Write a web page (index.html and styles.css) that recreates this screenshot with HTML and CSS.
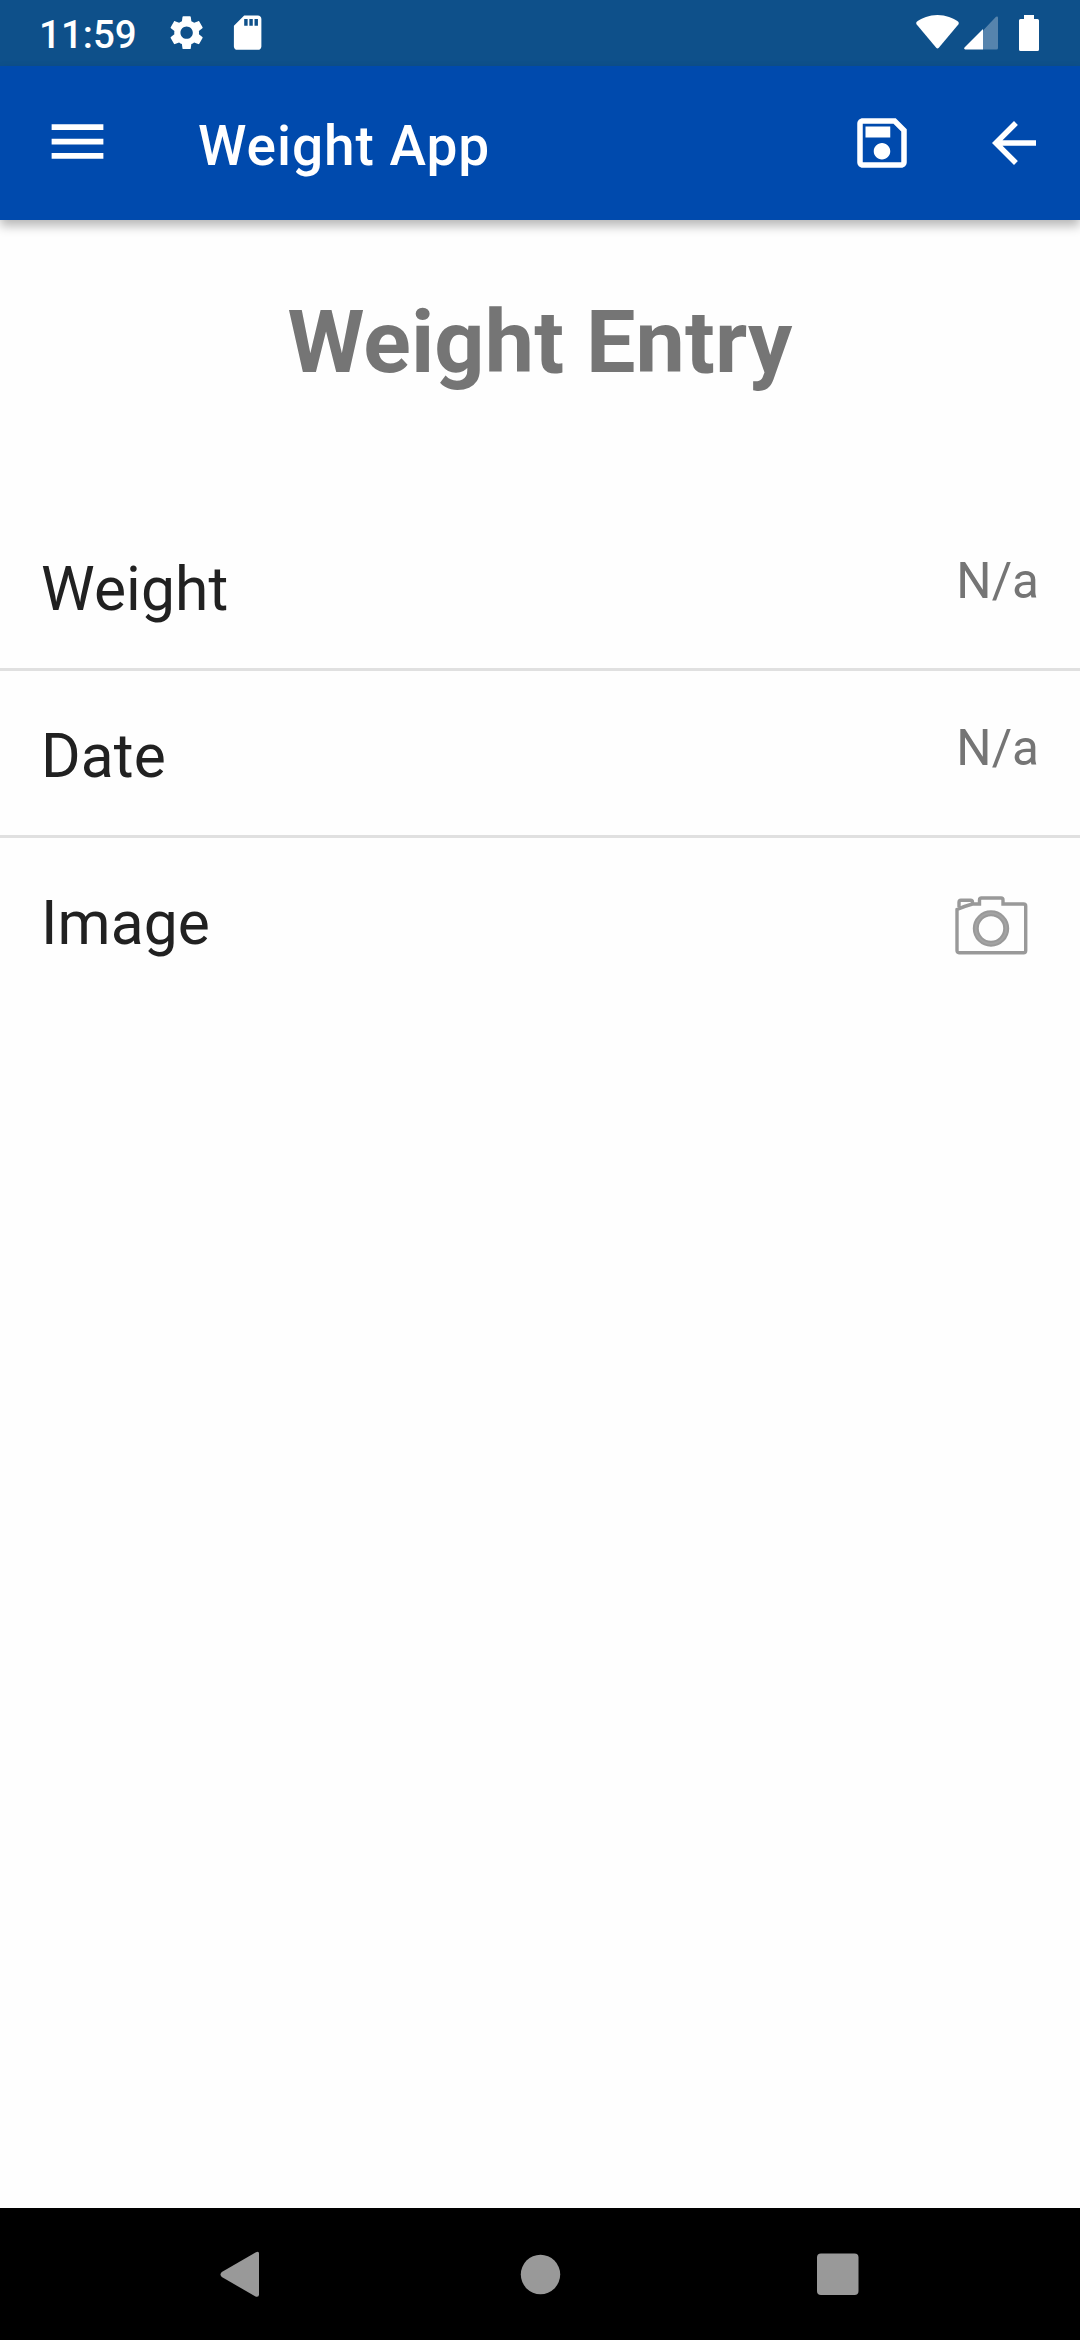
FILE: index.html
```html
<!DOCTYPE html>
<html lang="en">
<head>
<meta charset="utf-8">
<title>Weight App</title>
<link rel="stylesheet" href="styles.css">
</head>
<body>
<div class="screen">
  <div class="status-bar">
    <div class="status-left">
      <span class="clock">11:59</span>
      <svg class="gear-icon" viewBox="0 0 24 24"><path d="M19.14 12.94c.04-.3.06-.61.06-.94 0-.32-.02-.64-.07-.94l2.03-1.58c.18-.14.23-.41.12-.61l-1.92-3.32c-.12-.22-.37-.29-.59-.22l-2.39.96c-.5-.38-1.03-.7-1.62-.94L14.400 2.810c-.04-.24-.24-.41-.48-.41h-3.840c-.24 0-.43.17-.47.41l-.36 2.540c-.59.24-1.130.57-1.620.94l-2.390-.96c-.22-.08-.47 0-.59.22L2.740 8.870c-.12.21-.08.47.12.61l2.030 1.580c-.05.3-.09.63-.09.94s.02.64.07.94l-2.030 1.580c-.18.14-.23.41-.12.61l1.920 3.320c.12.22.37.29.59.22l2.390-.96c.5.38 1.030.7 1.620.94l.36 2.540c.05.24.24.41.48.41h3.840c.24 0 .44-.17.47-.41l.36-2.540c.59-.24 1.130-.56 1.620-.94l2.390.96c.22.08.47 0 .59-.22l1.920-3.320c.12-.22.07-.47-.12-.61l-2.010-1.580zM12 15.600c-1.980 0-3.600-1.620-3.600-3.600s1.620-3.600 3.600-3.600 3.600 1.620 3.600 3.600-1.620 3.600-3.600 3.600z"/></svg>
      <svg class="sd-icon" viewBox="0 0 24 24"><path d="M18 2h-8L4.020 8 4 20c0 1.100.9 2 2 2h12c1.100 0 2-.9 2-2V4c0-1.100-.9-2-2-2zm-6 6h-2V4h2v4zm3 0h-2V4h2v4zm3 0h-2V4h2v4z"/></svg>
    </div>
    <div class="status-right">
      <svg class="wifi-icon" viewBox="0 0 43 34"><path d="M21.500 0C13 0 6 3 1 6.500Q-.4 7.700.7 9.400L20.200 32.800Q21.500 34 22.800 32.800L42.300 9.400Q43.400 7.700 42 6.500C37 3 30 0 21.500 0Z"/></svg>
      <svg class="signal-icon" viewBox="0 0 34 34"><path opacity=".3" d="M19 14.500 32 .8Q34 0 34 1.800V32q0 1.500-1.500 1.500H19Z"/><path d="M19 13v20.500H1.200Q-.5 33 .5 31.500Z"/></svg>
      <svg class="battery-icon" viewBox="0 0 20 36"><path d="M5 0h10v4h3.500Q20 4 20 5.500v29q0 1.500-1.500 1.500h-17Q0 36 0 34.500v-29Q0 4 1.500 4H5Z"/></svg>
    </div>
  </div>

  <header class="app-bar">
    <svg class="menu-icon" viewBox="0 0 24 24"><path d="M3 18h18v-2H3v2zm0-5h18v-2H3v2zm0-7v2h18V6H3z" /></svg>
    <h1 class="app-title">Weight App</h1>
    <svg class="action-icon" viewBox="0 0 24 24"><path d="M17 3H5c-1.110 0-2 .9-2 2v14c0 1.100.89 2 2 2h14c1.100 0 2-.9 2-2V7l-4-4zm2 16H5V5h11.170L19 7.830V19zm-7-7c-1.660 0-3 1.340-3 3s1.340 3 3 3 3-1.340 3-3-1.340-3-3-3zM6 6h9v4H6V6z"/></svg>
    <svg class="action-icon" viewBox="0 0 24 24"><path d="M20 11H7.830l5.590-5.590L12 4l-8 8 8 8 1.410-1.410L7.830 13H20v-2z"/></svg>
  </header>

  <main class="content">
    <h2 class="page-title">Weight Entry</h2>
    <div class="rows">
      <div class="row"><span class="label">Weight</span><span class="value">N/a</span></div>
      <div class="row"><span class="label">Date</span><span class="value">N/a</span></div>
      <div class="row">
        <span class="label">Image</span>
        <svg class="camera-icon" viewBox="0 0 78 62">
          <path d="M7 15V10.500Q7 8.300 9 8.300h9.500q2 0 2 2v2.200M5 17.500Q13 14 20.500 12H27.500V8q0-2 2-2H49q2 0 2 2v4h20.500q2.200 0 2.200 2V58.500q0 2.200-2.200 2.200H7q-2 0-2-2.200Z"/>
          <circle class="lens" cx="39" cy="36.500" r="15.200"/>
          <circle class="lens-shine" cx="39" cy="36.500" r="15.200"/>
        </svg>
      </div>
    </div>
  </main>

  <nav class="nav-bar">
    <svg class="nav-icon" viewBox="0 0 60 60"><path d="M39 9.500v41q0 3-3.500 2L1.800 33Q-.8 30.500 1.800 28L35.500 8.500Q39 6.500 39 9.500Z"/></svg>
    <svg class="nav-icon" viewBox="0 0 60 60"><circle cx="30.500" cy="30.500" r="19.700"/></svg>
    <svg class="nav-icon" viewBox="0 0 60 60"><rect x="9" y="9.500" width="41.500" height="41.500" rx="4"/></svg>
  </nav>
</div>
</body>
</html>
```
FILE: styles.css
```css
* {
  box-sizing: border-box;
}

body {
  margin: 0;
  font-family: Roboto, sans-serif;
  background: #fefefe;
}

svg {
  display: block;
  flex: none;
  fill: #fff;
}

h1,
h2 {
  margin: 0;
}

.screen {
  display: flex;
  flex-direction: column;
  width: 1080px;
  height: 2340px;
  overflow: hidden;
}

.status-bar {
  display: flex;
  justify-content: space-between;
  height: 66px;
  padding: 0 41px 0 39px;
  background: #0e508a;
}

.status-left,
.status-right {
  display: flex;
  align-items: center;
}

.clock {
  width: 127px;
  padding-top: 3px;
  font-size: 38.5px;
  font-weight: 500;
  line-height: 46px;
  color: #fff;
}

.gear-icon,
.sd-icon {
  width: 41.25px;
  height: 41.25px;
}

.gear-icon {
  margin-right: 20px;
}

.status-right {
  align-items: flex-start;
}

.wifi-icon {
  width: 43px;
  height: 34px;
  margin: 15px 5px 0 0;
}

.signal-icon {
  width: 34px;
  height: 34px;
  margin: 16px 21px 0 0;
}

.battery-icon {
  width: 20px;
  height: 36px;
  margin-top: 15px;
}

.app-bar {
  display: flex;
  align-items: center;
  height: 154px;
  padding: 0 33px 0 43px;
  background: #004aad;
  box-shadow: 0 6px 10px rgba(0, 0, 0, 0.28);
}

.menu-icon {
  width: 69px;
  height: 69px;
  margin-bottom: 4px;
}

.app-title {
  flex: 1;
  margin-left: 86px;
  padding-top: 6px;
  font-size: 55px;
  font-weight: 500;
  line-height: 64px;
  letter-spacing: 0.95px;
  color: #fff;
}

.action-icon {
  width: 66px;
  height: 66px;
}

.action-icon + .action-icon {
  margin-left: 66px;
}

.content {
  flex: 1;
}

.page-title {
  padding-top: 70px;
  font-size: 88px;
  font-weight: 700;
  line-height: 104px;
  letter-spacing: 0.1px;
  text-align: center;
  color: #757575;
}

.rows {
  margin-top: 110px;
}

.row {
  display: flex;
  justify-content: space-between;
  align-items: flex-start;
  height: 167px;
  padding: 0 41px;
  border-bottom: 3px solid #e0e0e0;
}

.row:last-child {
  border-bottom: 0;
}

.label {
  padding-top: 50px;
  font-size: 60.5px;
  line-height: 71px;
  letter-spacing: 0.12px;
  color: #212121;
}

.value {
  padding-top: 48px;
  font-size: 49.5px;
  line-height: 58px;
  color: #757575;
}

.camera-icon {
  width: 78px;
  height: 62px;
  margin: 54px 9px 0 0;
  overflow: visible;
  fill: none;
  stroke: #999;
  stroke-width: 3.4px;
}

.lens {
  stroke-width: 6px;
}

.lens-shine {
  stroke: #a3a3a3;
  stroke-width: 2px;
}

.nav-bar {
  display: flex;
  gap: 230px;
  align-items: center;
  height: 132px;
  padding-left: 220px;
  background: #000;
}

.nav-icon {
  width: 60px;
  height: 60px;
  fill: #999;
}

.nav-icon:last-child {
  margin-left: 8px;
}
```
